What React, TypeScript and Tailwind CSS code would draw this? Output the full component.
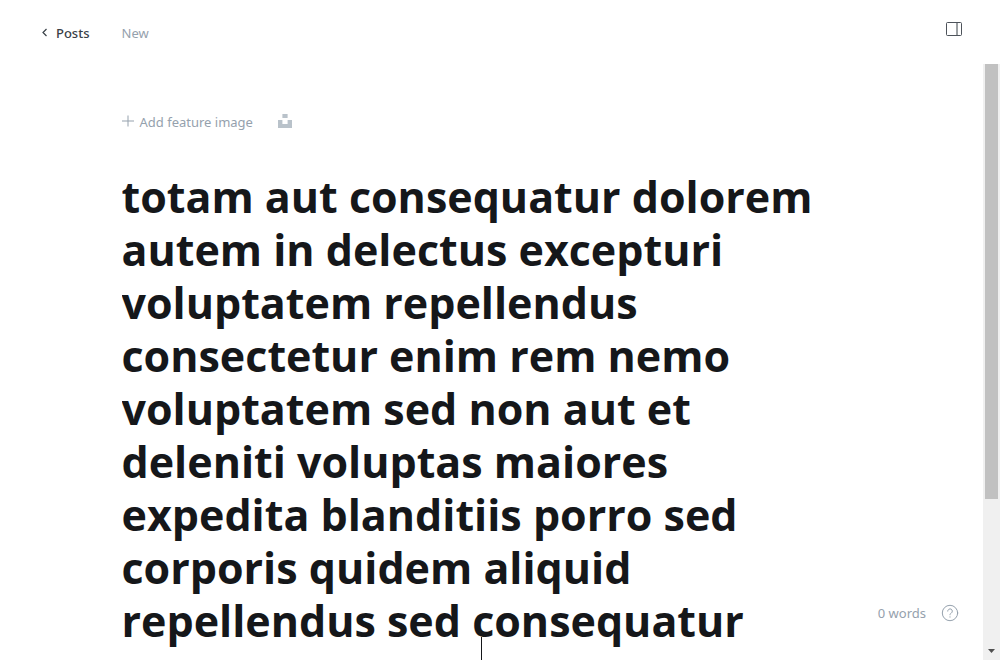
import React from 'react';

const title = [
  'totam aut consequatur dolorem',
  'autem in delectus excepturi',
  'voluptatem repellendus',
  'consectetur enim rem nemo',
  'voluptatem sed non aut et',
  'deleniti voluptas maiores',
  'expedita blanditiis porro sed',
  'corporis quidem aliquid',
  'repellendus sed consequatur',
].join('\n');

function Header() {
  return (
    <header className="flex h-16 shrink-0 items-start justify-between pr-9 pl-10">
      <nav className="flex items-center gap-8 pt-[23px] text-[13px] leading-5">
        <a href="#posts" className="flex items-center gap-2 font-medium text-[#394047]">
          <svg width="8" height="10" viewBox="0 0 8 10" fill="none" stroke="currentColor" strokeWidth="1.2" aria-hidden="true">
            <path d="M6.5 1 3 4.5 6.5 8" />
          </svg>
          Posts
        </a>
        <span className="text-[#95a1ad]">New</span>
      </nav>
      <button type="button" aria-label="Settings" className="mt-[19px] flex h-5 w-5 items-center justify-center text-[#394047]">
        <svg width="16" height="14" viewBox="0 0 16 14" fill="none" stroke="currentColor" aria-hidden="true">
          <rect x=".5" y=".5" width="15" height="13" rx="1" strokeWidth=".9" />
          <path d="M11 1v12" strokeWidth="1" />
        </svg>
      </button>
    </header>
  );
}

function FeatureImage() {
  return (
    <div className="flex h-5 items-center gap-[25px] text-[#95a1ad]">
      <button type="button" className="flex items-center gap-[5px] text-[13px] leading-5">
        <svg width="13" height="14" viewBox="0 0 13 14" stroke="currentColor" aria-hidden="true">
          <path d="M6 .5v11M0 6h12" strokeWidth="1" />
        </svg>
        Add feature image
      </button>
      <button type="button" aria-label="Select from Unsplash" className="pb-[2px]">
        <svg width="14" height="14" viewBox="0 0 14 14" fill="#b9c2ca" aria-hidden="true">
          <path d="M4.4 0h5.2v4H4.4zM0 6h4.4v4h5.2V6H14v8H0z" />
        </svg>
      </button>
    </div>
  );
}

function ScrollBar() {
  return (
    <div aria-hidden="true" className="flex w-[17px] shrink-0 flex-col items-center bg-[#f0f0f0]">
      <div className="h-[73%] w-[13px] bg-[#c1c1c1]" />
      <svg className="mt-auto mb-[7px]" width="7" height="4" viewBox="0 0 7 4" fill="#505050">
        <path d="M0 0h7L3.5 4z" />
      </svg>
    </div>
  );
}

export default function App() {
  return (
    <div className="flex h-screen flex-col overflow-hidden bg-white font-['Noto_Sans','Open_Sans',sans-serif]">
      <Header />
      <div className="relative flex min-h-0 flex-1">
        <main className="min-w-0 flex-1 overflow-hidden px-8 pt-12">
          <div className="mx-auto max-w-[740px]">
            <FeatureImage />
            <div className="relative mt-[38px]">
              <textarea
                aria-label="Post title"
                rows={10}
                defaultValue={title}
                spellCheck={false}
                className="block w-full resize-none overflow-hidden bg-transparent font-['Open_Sans','Noto_Sans',sans-serif] text-[43px] leading-[53px] font-bold text-[#15171a] outline-none"
              />
              <span aria-hidden="true" className="absolute top-[467px] left-[359px] h-16 w-px bg-[#15171a]" />
            </div>
          </div>
        </main>
        <ScrollBar />
        <footer className="absolute right-[41px] bottom-[37px] flex items-center gap-[15px] text-[13px] leading-5 text-[#95a1ad]">
          <span>0 words</span>
          <a href="#help" aria-label="Help">
            <svg width="18" height="18" viewBox="0 0 18 18" fill="none" stroke="currentColor" strokeLinecap="round" aria-hidden="true">
              <circle cx="9" cy="9" r="7.7" />
              <path d="M6.7 7.1a2.3 2.3 0 1 1 3.5 2c-.8.5-1.2.8-1.2 1.7" />
              <circle cx="9" cy="12.9" r=".6" fill="currentColor" stroke="none" />
            </svg>
          </a>
        </footer>
      </div>
    </div>
  );
}
